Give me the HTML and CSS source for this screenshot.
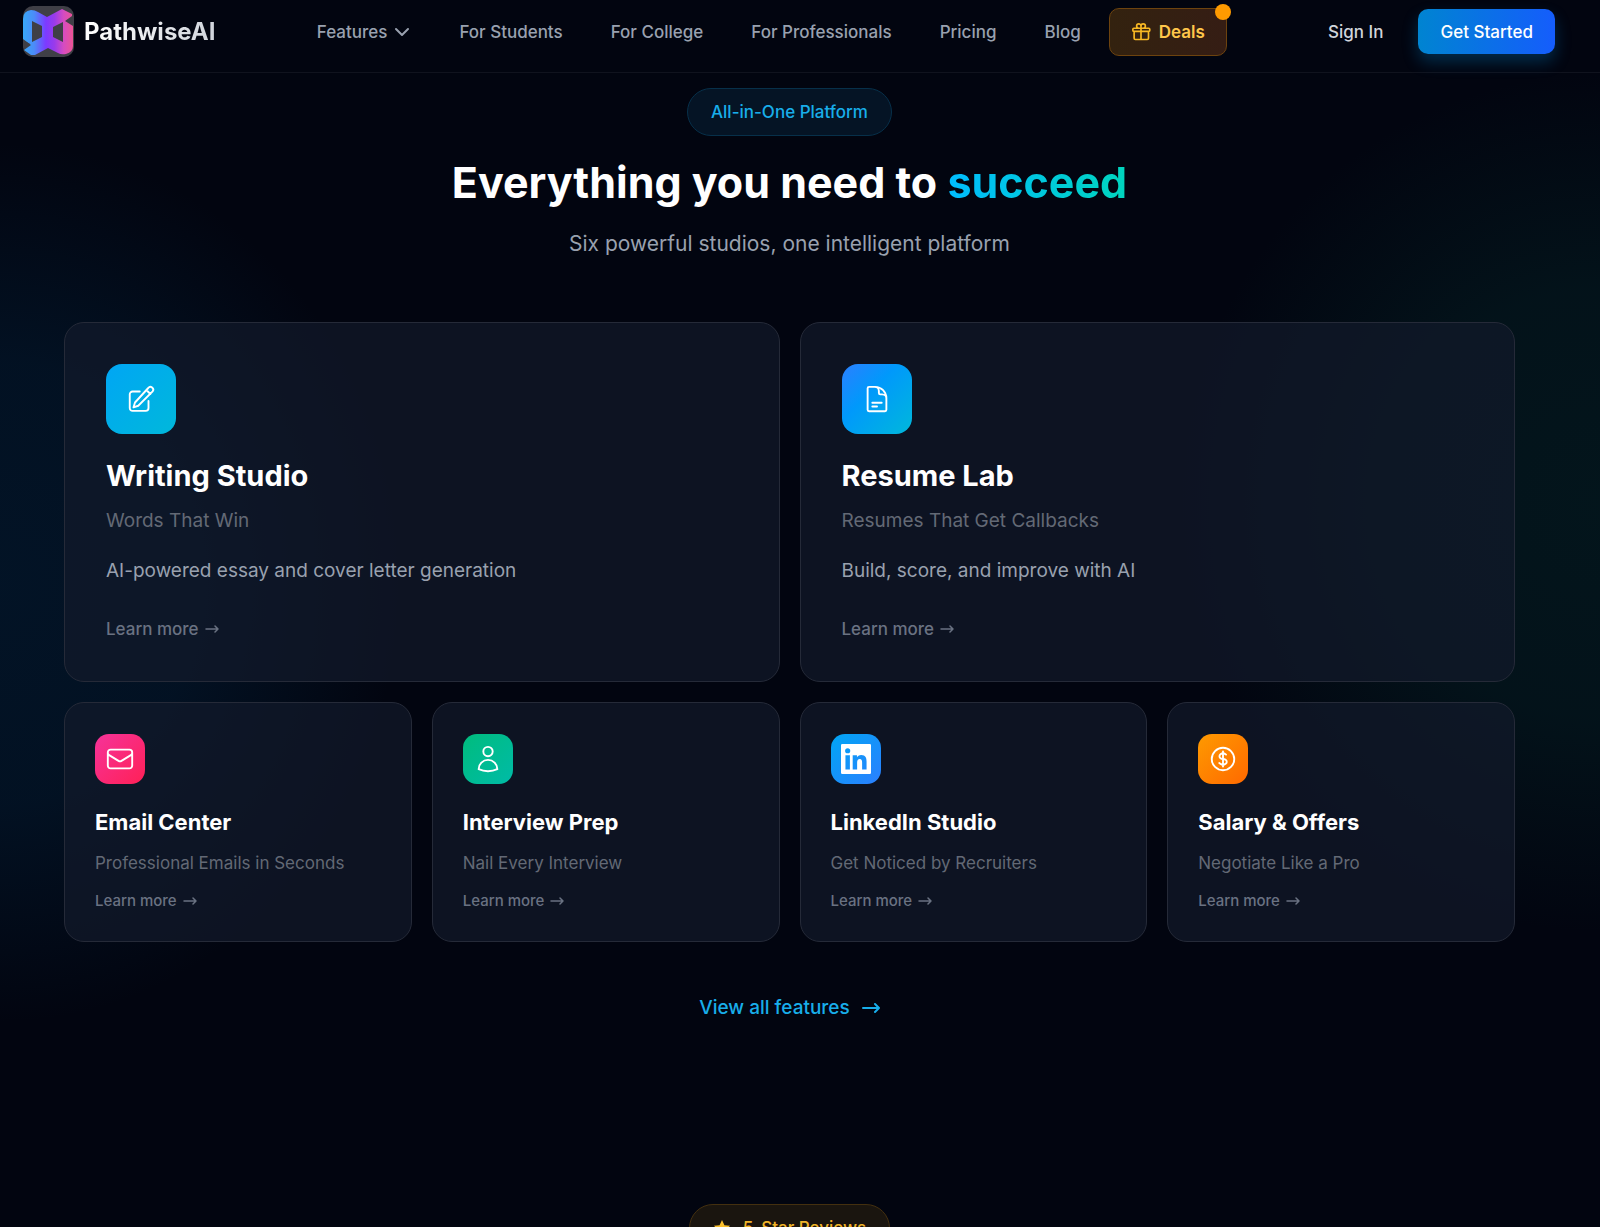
FILE: index.html
```html
<!DOCTYPE html>
<html lang="en">
<head>
  <meta charset="UTF-8" />
  <meta name="viewport" content="width=device-width, initial-scale=1" />
  <title>PathwiseAI - Everything you need to succeed</title>
  <link rel="stylesheet" href="styles.css">
</head>
<body>

<header class="site-header">
  <div class="header-inner">
    <a class="brand" href="#">
      <svg class="brand-mark" viewBox="0 0 51 51" aria-hidden="true">
        <defs>
          <linearGradient id="logo" gradientUnits="userSpaceOnUse" x1="0" y1="0" x2="51" y2="0">
            <stop offset="0" stop-color="#38a8f8" />
            <stop offset="0.22" stop-color="#4b8cf8" />
            <stop offset="0.45" stop-color="#7c3aff" />
            <stop offset="0.62" stop-color="#9a3bea" />
            <stop offset="0.8" stop-color="#d64cc0" />
            <stop offset="1" stop-color="#ee5590" />
          </linearGradient>
        </defs>
        <rect width="51" height="51" rx="10" fill="#3f3f46" />
        <path fill="url(#logo)" fill-rule="evenodd" d="M0 13Q0 5 8 4Q12 4 15 6L24 11L39 3L49 8V10L42 15L50 20V40Q50 46 43 48Q38 49 35 47L25 42L12 49H8L1 44L8 39L0 33ZM9 15V36L19 31V20ZM40 16L30 21V31L40 36Z" />
        <path fill="#3f3f46" d="M0 34L7 38L0 42Z" />
      </svg>
      <span class="brand-name">PathwiseAI</span>
    </a>

    <nav class="main-nav">
      <a class="nav-link" href="#">Features
        <svg class="chevron" viewBox="0 0 18 18" aria-hidden="true"><path d="M3 6l6 6 6-6" /></svg>
      </a>
      <a class="nav-link" href="#">For Students</a>
      <a class="nav-link" href="#">For College</a>
      <a class="nav-link" href="#">For Professionals</a>
      <a class="nav-link" href="#">Pricing</a>
      <a class="nav-link" href="#">Blog</a>
      <a class="deals" href="#">
        <svg class="gift" viewBox="0 0 24 24" aria-hidden="true">
          <path d="M21 11.25v8.25a1.5 1.5 0 0 1-1.5 1.5H5.25a1.5 1.5 0 0 1-1.5-1.5v-8.25M12 4.875A2.625 2.625 0 1 0 9.375 7.5H12m0-2.625V7.5m0-2.625A2.625 2.625 0 1 1 14.625 7.5H12m0 0V21m-8.625-9.75h18c.621 0 1.125-.504 1.125-1.125v-1.5c0-.621-.504-1.125-1.125-1.125h-18c-.621 0-1.125.504-1.125 1.125v1.5c0 .621.504 1.125 1.125 1.125Z" />
        </svg>
        Deals
        <span class="deals-dot"></span>
      </a>
    </nav>

    <div class="actions">
      <a class="sign-in" href="#">Sign In</a>
      <button class="get-started" type="button">Get Started</button>
    </div>
  </div>
</header>

<main class="page">

  <section class="features">
    <div class="intro">
      <span class="pill">All-in-One Platform</span>
      <h1>Everything you need to <span class="accent">succeed</span></h1>
      <p>Six powerful studios, one intelligent platform</p>
    </div>

    <div class="grid">
      <article class="card card-large">
        <div class="icon icon-writing">
          <svg viewBox="0 0 24 24" aria-hidden="true"><path d="M17.8 3.200A1.900 1.900 0 0 1 21.300 5.900L9.800 17.400L6 18.700L7.200 14.800ZM16.300 4.800L19.500 8" /><path d="M11 6H5.250A2.250 2.250 0 0 0 3 8.250V19.250A2.250 2.250 0 0 0 5.250 21.500H15.750A2.250 2.250 0 0 0 18 19.250V13.500" /></svg>
        </div>
        <h2>Writing Studio</h2>
        <p class="tagline">Words That Win</p>
        <p class="description">AI-powered essay and cover letter generation</p>
        <a class="more" href="#">Learn more
          <svg class="arrow" viewBox="0 0 14 10" aria-hidden="true"><path d="M1 5h12M10 2L13 5l-3 3" /></svg>
        </a>
      </article>

      <article class="card card-large">
        <div class="icon icon-resume">
          <svg viewBox="0 0 24 24" aria-hidden="true"><path d="M19.500 14.250v-2.625a3.375 3.375 0 0 0-3.375-3.375h-1.500A1.125 1.125 0 0 1 13.500 7.125v-1.500a3.375 3.375 0 0 0-3.375-3.375H8.250m0 12.750h7.500m-7.500 3H12M10.500 2.250H5.625c-.621 0-1.125.504-1.125 1.125v17.250c0 .621.504 1.125 1.125 1.125h12.750c.621 0 1.125-.504 1.125-1.125V11.250a9 9 0 0 0-9-9Z" /></svg>
        </div>
        <h2>Resume Lab</h2>
        <p class="tagline">Resumes That Get Callbacks</p>
        <p class="description">Build, score, and improve with AI</p>
        <a class="more" href="#">Learn more
          <svg class="arrow" viewBox="0 0 14 10" aria-hidden="true"><path d="M1 5h12M10 2L13 5l-3 3" /></svg>
        </a>
      </article>

      <article class="card">
        <div class="icon icon-email">
          <svg viewBox="0 0 24 24" aria-hidden="true"><path d="M21.750 6.750v10.500a2.250 2.250 0 0 1-2.250 2.250h-15a2.250 2.250 0 0 1-2.250-2.250V6.750m19.500 0A2.250 2.250 0 0 0 19.500 4.500h-15a2.250 2.250 0 0 0-2.250 2.250m19.500 0v.243a2.250 2.250 0 0 1-1.070 1.916l-7.500 4.615a2.250 2.250 0 0 1-2.360 0L3.320 8.910a2.250 2.250 0 0 1-1.070-1.916V6.750" /></svg>
        </div>
        <h2>Email Center</h2>
        <p class="tagline">Professional Emails in Seconds</p>
        <a class="more" href="#">Learn more
          <svg class="arrow" viewBox="0 0 14 10" aria-hidden="true"><path d="M1 5h12M10 2L13 5l-3 3" /></svg>
        </a>
      </article>

      <article class="card">
        <div class="icon icon-interview">
          <svg viewBox="0 0 24 24" aria-hidden="true"><path d="M15.750 6a3.750 3.750 0 1 1-7.500 0 3.750 3.750 0 0 1 7.500 0ZM4.501 20.118a7.500 7.500 0 0 1 14.998 0A17.933 17.933 0 0 1 12 21.750c-2.676 0-5.216-.584-7.499-1.632Z" /></svg>
        </div>
        <h2>Interview Prep</h2>
        <p class="tagline">Nail Every Interview</p>
        <a class="more" href="#">Learn more
          <svg class="arrow" viewBox="0 0 14 10" aria-hidden="true"><path d="M1 5h12M10 2L13 5l-3 3" /></svg>
        </a>
      </article>

      <article class="card">
        <div class="icon icon-linkedin">
          <svg class="solid" viewBox="0 0 24 24" aria-hidden="true"><path fill-rule="evenodd" d="M1 0h22a1 1 0 0 1 1 1v22a1 1 0 0 1-1 1H1a1 1 0 0 1-1-1V1a1 1 0 0 1 1-1ZM3.555 9v11.452h3.564V9ZM5.337 3.305a2.063 2.063 0 1 0 0 4.128 2.063 2.063 0 0 0 0-4.128ZM9.351 9v11.452h3.554v-5.569c0-1.850.630-2.900 2.130-2.900 1.360 0 1.860 1.050 1.860 2.900v5.569h3.552v-6.286c0-3.080-.660-5.450-4.267-5.450-1.730 0-2.900.930-3.368 1.850h-.048V9Z" /></svg>
        </div>
        <h2>LinkedIn Studio</h2>
        <p class="tagline">Get Noticed by Recruiters</p>
        <a class="more" href="#">Learn more
          <svg class="arrow" viewBox="0 0 14 10" aria-hidden="true"><path d="M1 5h12M10 2L13 5l-3 3" /></svg>
        </a>
      </article>

      <article class="card">
        <div class="icon icon-salary">
          <svg viewBox="0 0 24 24" aria-hidden="true"><path d="M12 6v12m-3-2.818.879.659c1.171.879 3.070.879 4.242 0 1.172-.879 1.172-2.303 0-3.182C13.536 12.219 12.768 12 12 12c-.725 0-1.450-.220-2.003-.659-1.106-.879-1.106-2.303 0-3.182s2.900-.879 4.006 0l.415.330M21 12a9 9 0 1 1-18 0 9 9 0 0 1 18 0Z" /></svg>
        </div>
        <h2>Salary &amp; Offers</h2>
        <p class="tagline">Negotiate Like a Pro</p>
        <a class="more" href="#">Learn more
          <svg class="arrow" viewBox="0 0 14 10" aria-hidden="true"><path d="M1 5h12M10 2L13 5l-3 3" /></svg>
        </a>
      </article>
    </div>

    <a class="view-all" href="#">View all features
      <svg class="arrow-lg" viewBox="0 0 18 12" aria-hidden="true"><path d="M1 6h16M13 2L17 6l-4 4" /></svg>
    </a>
  </section>

  <section class="reviews">
    <span class="pill pill-amber">
      <svg class="star" viewBox="0 0 20 20" aria-hidden="true"><path d="M10 1l2.700 5.900 6.300.700-4.700 4.300 1.300 6.300L10 15l-5.600 3.200 1.300-6.300L1 7.600l6.300-.700z" /></svg>
      5-Star Reviews
    </span>
  </section>

</main>

</body>
</html>
```
FILE: styles.css
```css
* { box-sizing: border-box; }

body {
  margin: 0;
  background: #020510;
  color: #fff;
  font-family: Inter, "Liberation Sans", sans-serif;
  font-size: 17px;
}
a { color: inherit; text-decoration: none; }
h1, h2, p { margin: 0; }
svg { flex: none; fill: none; stroke: currentColor; stroke-linecap: round; stroke-linejoin: round; }

/* header */
.site-header {
  background: #020510;
  border-bottom: 1px solid #10131e;
}
.header-inner {
  display: flex;
  align-items: center;
  justify-content: space-between;
  height: 72px;
  padding: 0 45px 9px 23px;
}
.brand { display: flex; align-items: center; gap: 10px; }
.brand-mark { width: 51px; height: 51px; stroke: none; }
.brand-name {
  font-size: 24px;
  font-weight: 700;
  background: linear-gradient(90deg, #fff, #d1d5dc);
  -webkit-background-clip: text;
  background-clip: text;
  color: transparent;
}
.main-nav { display: flex; align-items: center; gap: 8px; }
.nav-link {
  display: flex;
  align-items: center;
  gap: 6px;
  padding: 0 20px;
  color: #99a1af;
  font-weight: 500;
}
.chevron { width: 18px; height: 18px; stroke-width: 2; }
.deals {
  position: relative;
  display: flex;
  align-items: center;
  gap: 8px;
  height: 48px;
  padding: 0 21px;
  border: 1px solid #6d430e;
  border-radius: 10px;
  background: linear-gradient(90deg, #33220f, #351d14);
  color: #ffc64a;
  font-weight: 600;
}
.gift { width: 20px; height: 20px; stroke-width: 2; stroke: #f8b824; }
.deals-dot {
  position: absolute;
  top: -5px;
  right: -5px;
  width: 16px;
  height: 16px;
  border-radius: 50%;
  background: #fe9a00;
}
.actions { display: flex; align-items: center; gap: 15px; }
.sign-in { padding: 0 20px; color: #d1d5dc; font-weight: 500; }
.get-started {
  height: 45px;
  padding: 0 22px;
  border: 0;
  border-radius: 10px;
  background: linear-gradient(90deg, #0084d1, #155dfc);
  box-shadow: 0 8px 16px rgba(0, 132, 209, 0.3);
  color: #fff;
  font: inherit;
  font-weight: 500;
}

/* main content */
.page {
  padding: 15px 85px 0 64px;
  background:
    radial-gradient(ellipse 400px 440px at 0 510px, rgba(4, 70, 115, 0.22), rgba(4, 70, 115, 0.19) 50%, transparent),
    radial-gradient(ellipse 420px 430px at 100% 430px, rgba(8, 85, 75, 0.2), rgba(8, 85, 75, 0.17) 50%, transparent);
}
.features, .intro { display: flex; flex-direction: column; align-items: center; }
.pill {
  display: flex;
  align-items: center;
  gap: 12px;
  height: 48px;
  padding: 0 23px;
  border: 1px solid #07304a;
  border-radius: 24px;
  background: #051425;
  color: #18aeea;
  font-weight: 500;
}
.intro h1 {
  margin-top: 16px;
  font-size: 43px;
  line-height: 60px;
  font-weight: 700;
}
.accent {
  background: linear-gradient(90deg, #00bcff, #00d5be);
  -webkit-background-clip: text;
  background-clip: text;
  color: transparent;
}
.intro p {
  margin-top: 16px;
  color: #99a1af;
  font-size: 21px;
  line-height: 32px;
}
.grid {
  display: grid;
  grid-template-columns: repeat(4, 1fr);
  gap: 20px;
  width: 100%;
  margin-top: 62px;
}
.card {
  display: flex;
  flex-direction: column;
  align-items: flex-start;
  padding: 31px 30px 30px;
  border: 1px solid #252a38;
  border-radius: 20px;
  background: rgba(19, 25, 43, 0.7);
}
.card-large { grid-column: span 2; padding: 41px 41px 40px; }

.icon {
  display: flex;
  align-items: center;
  justify-content: center;
  width: 50px;
  height: 50px;
  border-radius: 14px;
}
.icon svg { width: 30px; height: 30px; stroke-width: 1.5; }
.icon .solid { fill: #fff; stroke: none; }
.card-large .icon { width: 70px; height: 70px; border-radius: 16px; }
.icon-writing { background: linear-gradient(135deg, #00a6f4, #00b8db); }
.icon-resume { background: linear-gradient(135deg, #2b7fff, #0099fb 40%, #00b8db); }
.icon-email { background: linear-gradient(135deg, #f6339a, #ff2056); }
.icon-interview { background: linear-gradient(135deg, #00bc7d, #00bba7); }
.icon-linkedin { background: linear-gradient(135deg, #00a6f4, #2b7fff); }
.icon-salary { background: linear-gradient(135deg, #fe9a00, #ff6900); }

.card h2 {
  margin-top: 24px;
  font-size: 22px;
  line-height: 28px;
  font-weight: 700;
}
.tagline { margin-top: 15px; color: #636975; line-height: 24px; }
.more {
  display: flex;
  align-items: center;
  gap: 6px;
  margin-top: 16px;
  color: #6a7282;
  font-size: 15px;
  line-height: 20px;
  font-weight: 500;
}
.arrow { width: 14px; height: 10px; stroke-width: 1.5; }

.card-large h2 { font-size: 29px; line-height: 36px; }
.card-large .tagline { margin-top: 12px; font-size: 19px; line-height: 30px; }
.description { margin-top: 20px; color: #99a1af; font-size: 19px; line-height: 30px; }
.card-large .more { margin-top: 31px; font-size: 17px; line-height: 24px; }

.view-all {
  display: flex;
  align-items: center;
  gap: 12px;
  margin-top: 52px;
  color: #18aeea;
  font-size: 19px;
  line-height: 28px;
  font-weight: 500;
}
.arrow-lg { width: 18px; height: 12px; stroke-width: 2; }

.reviews { display: flex; justify-content: center; padding-top: 182px; }
.pill-amber { border-color: #44300f; background: #1a150f; color: #f0b429; }
.star { width: 18px; height: 18px; fill: #fbc02d; stroke: none; }
```
